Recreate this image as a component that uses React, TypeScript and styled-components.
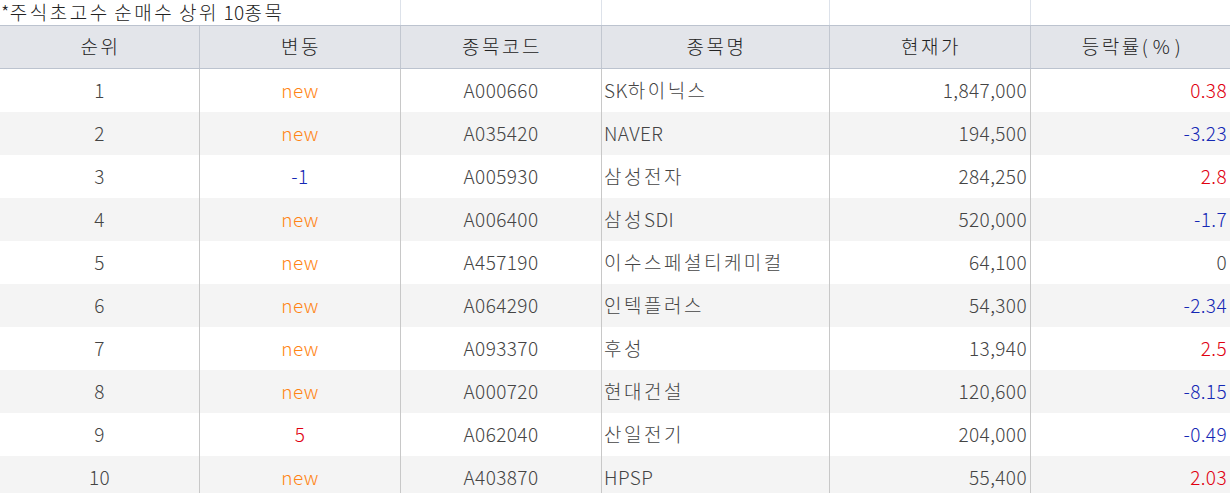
import styled, { createGlobalStyle } from "styled-components";

const GlobalStyle = createGlobalStyle`
  html, body {
    margin: 0;
    padding: 0;
    background: #fff;
    overflow: hidden;
  }
  body {
    font-family: "Noto Sans CJK KR", "Noto Sans", sans-serif;
  }
`;

const COLS = "200px 201px 201px 228px 201px 1fr";

const StyledBoard = styled.div`
  width: 1230px;
  font-size: 19px;
  font-weight: 300;
  letter-spacing: 0.4px;
  color: #444;
`;

// hangul glyphs are narrower than the original gulim face, so spread them out
const StyledHangul = styled.span`
  letter-spacing: 2.5px;
`;

const StyledTitleRow = styled.div`
  display: grid;
  grid-template-columns: 401px 201px 228px 201px 1fr;
  height: 25px;
`;

const StyledTitleCell = styled.div`
  border-right: 1px solid #dde2ea;
  line-height: 23px;
  padding-left: 1px;
  color: #222;
  white-space: nowrap;
  &:last-child {
    border-right: none;
  }
`;

const StyledHeader = styled.div`
  display: grid;
  grid-template-columns: ${COLS};
  height: 42px;
  background-color: #e3e5ea;
  border-top: 1px solid #bcc3cf;
  border-bottom: 1px solid #bcc3cf;
`;

const StyledHeadCell = styled.div`
  display: flex;
  justify-content: center;
  align-items: center;
  padding: 0 0 3px 2px;
  color: #222;
  white-space: pre;
  border-right: 1px solid #c2c7d0;
  &:last-child {
    border-right: none;
  }
`;

const StyledRow = styled.div<{ $striped: boolean }>`
  display: grid;
  grid-template-columns: ${COLS};
  height: 43px;
  background-color: ${(p) => (p.$striped ? "#f4f4f4" : "#ffffff")};
  &:first-of-type {
    height: 42px;
  }
`;

const StyledCell = styled.div<{
  $align?: "left" | "center" | "right";
  $color?: string;
}>`
  display: flex;
  align-items: center;
  justify-content: ${(p) =>
    p.$align === "left" ? "flex-start" : p.$align === "right" ? "flex-end" : "center"};
  padding: ${(p) =>
    p.$align === "left" ? "0 0 3px 2px" : p.$align === "right" ? "0 3px 3px 0" : "0 0 3px 0"};
  color: ${(p) => p.$color || "#444"};
  white-space: nowrap;
  border-right: 1px solid #c8c8c8;
  &:last-child {
    border-right: none;
  }
`;

const ORANGE = "#ff8514";
const RED = "#e0000f";
const BLUE = "#1428b4";

type Stock = {
  rank: number;
  change: string;
  code: string;
  name: string;
  price: string;
  rate: string;
};

const stocks: Stock[] = [
  { rank: 1, change: "new", code: "A000660", name: "SK하이닉스", price: "1,847,000", rate: "0.38" },
  { rank: 2, change: "new", code: "A035420", name: "NAVER", price: "194,500", rate: "-3.23" },
  { rank: 3, change: "-1", code: "A005930", name: "삼성전자", price: "284,250", rate: "2.8" },
  { rank: 4, change: "new", code: "A006400", name: "삼성SDI", price: "520,000", rate: "-1.7" },
  { rank: 5, change: "new", code: "A457190", name: "이수스페셜티케미컬", price: "64,100", rate: "0" },
  { rank: 6, change: "new", code: "A064290", name: "인텍플러스", price: "54,300", rate: "-2.34" },
  { rank: 7, change: "new", code: "A093370", name: "후성", price: "13,940", rate: "2.5" },
  { rank: 8, change: "new", code: "A000720", name: "현대건설", price: "120,600", rate: "-8.15" },
  { rank: 9, change: "5", code: "A062040", name: "산일전기", price: "204,000", rate: "-0.49" },
  { rank: 10, change: "new", code: "A403870", name: "HPSP", price: "55,400", rate: "2.03" },
];

const headers = ["순위", "변동", "종목코드", "종목명", "현재가", "등락률( % )"];

function changeColor(change: string) {
  if (change === "new") return ORANGE;
  if (change.startsWith("-")) return BLUE;
  return RED;
}

function rateColor(rate: string) {
  const n = parseFloat(rate);
  if (n > 0) return RED;
  if (n < 0) return BLUE;
  return "#444";
}

function Text({ children }: { children: string }) {
  const parts = children.split(/([\uAC00-\uD7A3]+)/).filter(Boolean);
  return (
    <>
      {parts.map((part, i) =>
        /[\uAC00-\uD7A3]/.test(part) ? (
          <StyledHangul key={i}>{part}</StyledHangul>
        ) : (
          <span key={i}>{part}</span>
        )
      )}
    </>
  );
}

export default function App() {
  return (
    <>
      <GlobalStyle />
      <StyledBoard>
        <StyledTitleRow>
          <StyledTitleCell>
            <Text>*주식초고수 순매수 상위 10종목</Text>
          </StyledTitleCell>
          <StyledTitleCell />
          <StyledTitleCell />
          <StyledTitleCell />
          <StyledTitleCell />
        </StyledTitleRow>

        <StyledHeader>
          {headers.map((h) => (
            <StyledHeadCell key={h}>
              <Text>{h}</Text>
            </StyledHeadCell>
          ))}
        </StyledHeader>

        {stocks.map((s, i) => (
          <StyledRow key={s.code} $striped={i % 2 === 1}>
            <StyledCell>{s.rank}</StyledCell>
            <StyledCell $color={changeColor(s.change)}>{s.change}</StyledCell>
            <StyledCell>{s.code}</StyledCell>
            <StyledCell $align="left">
              <Text>{s.name}</Text>
            </StyledCell>
            <StyledCell $align="right">{s.price}</StyledCell>
            <StyledCell $align="right" $color={rateColor(s.rate)}>
              {s.rate}
            </StyledCell>
          </StyledRow>
        ))}
      </StyledBoard>
    </>
  );
}
